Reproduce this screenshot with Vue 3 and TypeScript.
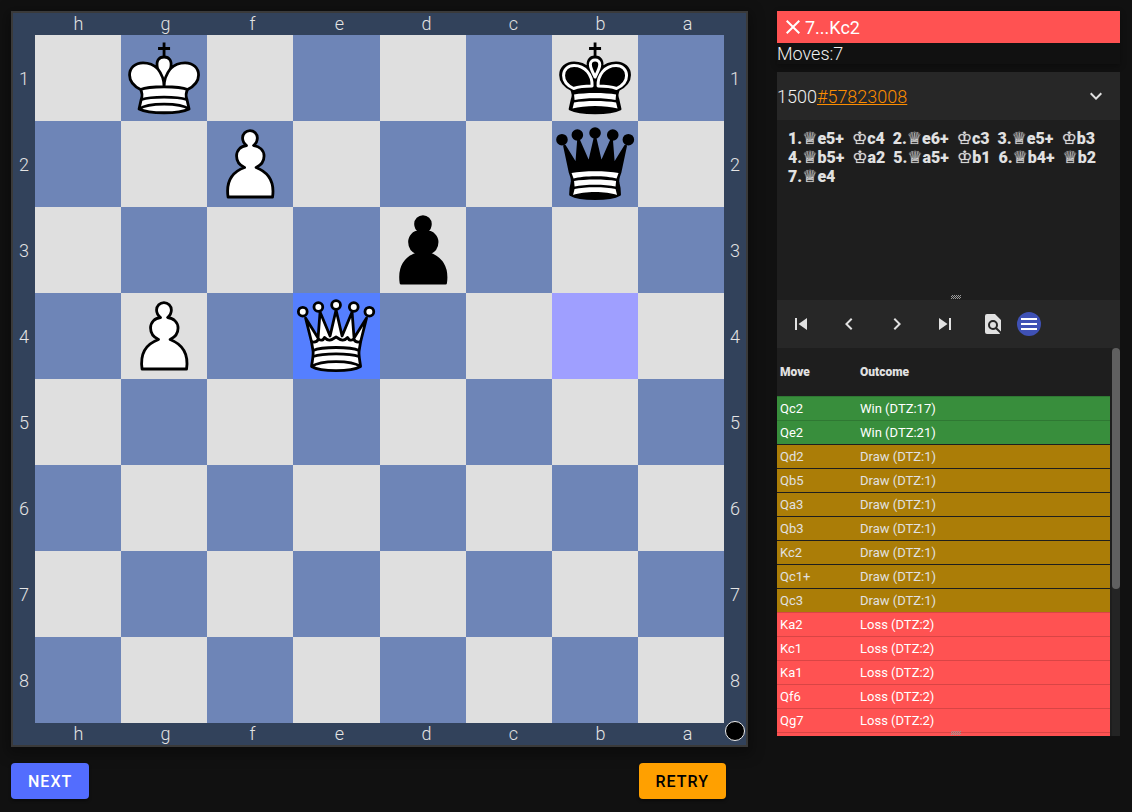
<script setup lang="ts">
type Piece = 'wk' | 'wq' | 'wp' | 'bk' | 'bq' | 'bp'
type Result = 'win' | 'draw' | 'loss'

interface TableRow {
  move: string
  outcome: string
  result: Result
}

interface Move {
  number: string
  figure: string
  to: string
}

const files = ['h', 'g', 'f', 'e', 'd', 'c', 'b', 'a']
const ranks = [1, 2, 3, 4, 5, 6, 7, 8]

const pieces: Record<string, Piece> = {
  g1: 'wk',
  b1: 'bk',
  f2: 'wp',
  b2: 'bq',
  d3: 'bp',
  g4: 'wp',
  e4: 'wq',
}

const squares = ranks.flatMap((rank, row) =>
  files.map((file, col) => {
    const name = `${file}${rank}`
    return {
      name,
      piece: pieces[name],
      dark: (row + col) % 2 === 1,
      origin: name === 'b4',
      target: name === 'e4',
    }
  }),
)

const moves: Move[] = [
  { number: '1.', figure: '♕', to: 'e5+' },
  { number: '', figure: '♔', to: 'c4' },
  { number: '2.', figure: '♕', to: 'e6+' },
  { number: '', figure: '♔', to: 'c3' },
  { number: '3.', figure: '♕', to: 'e5+' },
  { number: '', figure: '♔', to: 'b3' },
  { number: '4.', figure: '♕', to: 'b5+' },
  { number: '', figure: '♔', to: 'a2' },
  { number: '5.', figure: '♕', to: 'a5+' },
  { number: '', figure: '♔', to: 'b1' },
  { number: '6.', figure: '♕', to: 'b4+' },
  { number: '', figure: '♕', to: 'b2' },
  { number: '7.', figure: '♕', to: 'e4' },
]

function rows(result: Result, outcome: string, names: string[]): TableRow[] {
  return names.map((move) => ({ move, outcome, result }))
}

const table: TableRow[] = [
  ...rows('win', 'Win (DTZ:17)', ['Qc2']),
  ...rows('win', 'Win (DTZ:21)', ['Qe2']),
  ...rows('draw', 'Draw (DTZ:1)', ['Qd2', 'Qb5', 'Qa3', 'Qb3', 'Kc2', 'Qc1+', 'Qc3']),
  ...rows('loss', 'Loss (DTZ:2)', ['Ka2', 'Kc1', 'Ka1', 'Qf6', 'Qg7']),
  ...rows('loss', '', ['']),
]

const controls = [
  { label: 'First move', path: 'M6,18V6H8V18H6M9.5,12L18,6V18L9.5,12Z' },
  { label: 'Previous move', path: 'M15.41,16.58L10.83,12L15.41,7.41L14,6L8,12L14,18L15.41,16.58Z' },
  { label: 'Next move', path: 'M8.59,16.58L13.17,12L8.59,7.41L10,6L16,12L10,18L8.59,16.58Z' },
  { label: 'Last move', path: 'M16,18H18V6H16M6,18L14.5,12L6,6V18Z' },
  {
    label: 'Analyse',
    path: 'M9,13A3,3 0 0,0 12,16A3,3 0 0,0 15,13A3,3 0 0,0 12,10A3,3 0 0,0 9,13M20,19.59V8L14,2H6A2,2 0 0,0 4,4V20A2,2 0 0,0 6,22H18C18.45,22 18.85,21.85 19.19,21.6L14.76,17.17C13.96,17.69 13,18 12,18A5,5 0 0,1 7,13A5,5 0 0,1 12,8A5,5 0 0,1 17,13C17,14 16.69,14.96 16.17,15.75L20,19.59Z',
  },
]
</script>

<template>
  <main class="page">
    <section class="play">
      <div class="board">
        <div class="files top">
          <span v-for="f in files" :key="f">{{ f }}</span>
        </div>
        <div class="ranks left">
          <span v-for="r in ranks" :key="r">{{ r }}</span>
        </div>
        <div class="squares">
          <div
            v-for="s in squares"
            :key="s.name"
            class="square"
            :class="{ dark: s.dark, origin: s.origin, target: s.target }"
          >
            <svg v-if="s.piece" class="piece" :class="s.piece[0]" viewBox="0 0 86 86" aria-hidden="true">
              <template v-if="s.piece === 'wp' || s.piece === 'bp'">
                <path
                  d="M21 76C19 62 23.500 51.500 37.500 46.500C32 44 29.500 39.500 29.500 35C29.500 29.500 33.500 25 39.500 24.500C37 22.500 35.500 20 35.500 17A7.400 7.400 0 0 1 50.300 17C50.300 20 49 22.500 46.500 24.500C52.500 25 57 29.500 57 35C57 39.500 54.500 44 49 46.500C62 51.500 67.500 62 65.500 76Z"
                />
              </template>
              <template v-else-if="s.piece === 'wk'">
                <path d="M43 7.500V22M37 13.500H49" />
                <path
                  d="M19.500 54.500C12.500 51 8.500 46.500 8.500 40C8.500 33 14 27.800 22 27.800C28 27.800 33 30 36.500 33.500C34.500 25.500 38 22 43 22C48 22 51.500 25.500 49.500 33.500C53 30 58 27.800 64 27.800C72 27.800 77.500 33 77.500 40C77.500 46.500 73.500 51 66.500 54.500C64.500 58 64.500 61 66 65L68 74C58 79 28 79 18 74L20 65C21.500 61 21.500 58 19.500 54.500Z"
                />
                <path
                  fill="none"
                  d="M43 51.500C43 43 40 38 36.500 33.500M43 51.500C43 43 46 38 49.500 33.500M19.500 54.500C28 50.800 58 50.800 66.500 54.500M20.500 64.500C30 61.200 56 61.200 65.500 64.500M18 74C27 67.500 59 67.500 68 74"
                />
              </template>
              <template v-else-if="s.piece === 'bk'">
                <path d="M43 7.500V22M37 13.500H49" />
                <path
                  d="M19.500 54.500C12.500 51 8.500 46.500 8.500 40C8.500 33 14 27.800 22 27.800C28 27.800 33 30 36.500 33.500C34.500 25.500 38 22 43 22C48 22 51.500 25.500 49.500 33.500C53 30 58 27.800 64 27.800C72 27.800 77.500 33 77.500 40C77.500 46.500 73.500 51 66.500 54.500C64.500 58 64.500 61 66 65L68 74C58 79 28 79 18 74L20 65C21.500 61 21.500 58 19.500 54.500Z"
                />
                <path
                  class="inlay"
                  d="M21.500 53.500C15 50.500 11.500 46 11.500 40.500C11.500 34.500 16 30.500 22 30.500C33 30.500 40.500 40 40 51C33 51 27 51.500 21.500 53.500ZM64.500 53.500C71 50.500 74.500 46 74.500 40.500C74.500 34.500 70 30.500 64 30.500C53 30.500 45.500 40 46 51C53 51 59 51.500 64.500 53.500ZM43 42C40 36 38.300 33 38.300 29.500C38.300 23.500 47.700 23.500 47.700 29.500C47.700 33 46 36 43 42Z"
                />
                <path
                  class="light"
                  d="M22 59.500C33 57.500 53 57.500 64 59.500L63.500 65C53 62.500 33 62.500 22.500 65ZM22 67.500C33 65.500 53 65.500 64 67.500L65.500 73.500C54 70 32 70 20.500 73.500Z"
                />
              </template>
              <template v-else-if="s.piece === 'wq'">
                <path
                  d="M18.500 49L12.500 25L25 45L27 19L37 43L43 17L49 43L59 19L61 45L73.500 25L67.500 49L66 58C65.500 62 66.500 66 67.500 73.500C58 79 28 79 18.500 73.500C19.500 66 20.500 62 20 58Z"
                />
                <path
                  fill="none"
                  d="M18 48.500C20.500 49.500 23.500 49.500 25.500 46C28 48 30 47.500 31.500 44.500C35 48.500 38 47.500 43 44C48 47.500 51 48.500 54.500 44.500C56 47.500 58 48 60.500 46C62.500 49.500 65.500 49.500 68 48.500M20 57.500C29 53.500 57 53.500 66 57.500M20 63.500C30 60 56 60 66 63.500M18.500 73.500C28 67 58 67 67.500 73.500"
                />
                <circle cx="9.700" cy="18.700" r="4.400" />
                <circle cx="25.300" cy="14" r="4.400" />
                <circle cx="43" cy="12" r="4.400" />
                <circle cx="60.700" cy="14" r="4.400" />
                <circle cx="76.300" cy="18.700" r="4.400" />
              </template>
              <template v-else>
                <path
                  d="M18 51L12.500 25L24.500 44.500L26.500 19L37 43L43 17L49 43L59.500 19L61.500 44.500L73.500 25L68 51C67 54 65 58 66 62C67.500 67 67.500 70 67.500 73.500C58 79 28 79 18.500 73.500C18.500 70 18.500 67 20 62C21 58 19 54 18 51Z"
                />
                <path
                  class="light"
                  d="M19.500 52C32 49.500 54 49.500 66.500 52L64.500 57.500C54 54.500 32 54.500 21.500 57.500ZM22 60C33 58 53 58 64 60L63.500 65.500C53 63 33 63 22.500 65.500ZM22.500 68C33 65.500 53 65.500 63.500 68L65 74C54 70 32 70 21 74Z"
                />
                <circle cx="9.900" cy="18.700" r="4.400" />
                <circle cx="25.300" cy="14" r="4.400" />
                <circle cx="43" cy="12" r="4.400" />
                <circle cx="60.700" cy="14" r="4.400" />
                <circle cx="76.300" cy="18.700" r="4.400" />
              </template>
            </svg>
          </div>
        </div>
        <div class="ranks right">
          <span v-for="r in ranks" :key="r">{{ r }}</span>
        </div>
        <div class="files bottom">
          <span v-for="f in files" :key="f">{{ f }}</span>
        </div>
        <div class="turn"></div>
      </div>
      <div class="actions">
        <button type="button" class="action next">NEXT</button>
        <button type="button" class="action retry">RETRY</button>
      </div>
    </section>

    <aside class="panel">
      <header class="status">
        <div class="verdict">
          <svg class="icon" viewBox="0 0 24 24" aria-hidden="true">
            <path d="M19,6.410L17.590,5L12,10.590L6.410,5L5,6.410L10.590,12L5,17.590L6.410,19L12,13.410L17.590,19L19,17.590L13.410,12L19,6.410Z" />
          </svg>
          <span>7...Kc2</span>
        </div>
        <div class="count">Moves:7</div>
      </header>

      <div class="bar puzzle">
        <span>1500</span><a href="#57823008">#57823008</a>
        <button type="button" class="tool expand" aria-label="Show details">
          <svg class="icon" viewBox="0 0 24 24" aria-hidden="true">
            <path d="M7.410,8.580L12,13.170L16.590,8.580L18,10L12,16L6,10L7.410,8.580Z" />
          </svg>
        </button>
      </div>

      <div class="history">
        <p class="moves">
          <template v-for="(m, i) in moves" :key="i"><span class="move">{{ m.number }}<span class="figure">{{ m.figure }}</span>{{ m.to }}</span>{{ ' ' }}</template>
        </p>
        <div class="grip"></div>
      </div>

      <nav class="bar">
        <button v-for="c in controls" :key="c.label" type="button" class="tool" :aria-label="c.label">
          <svg class="icon" viewBox="0 0 24 24" aria-hidden="true"><path :d="c.path" /></svg>
        </button>
        <button type="button" class="menu" aria-label="Tablebase">
          <svg class="icon" viewBox="0 0 24 24" aria-hidden="true">
            <path d="M4,6H20V8H4V6M4,11H20V13H4V11M4,16H20V18H4V16Z" />
          </svg>
        </button>
      </nav>

      <div class="tablebase">
        <table>
          <thead>
            <tr>
              <th class="first">Move</th>
              <th>Outcome</th>
            </tr>
          </thead>
          <tbody>
            <tr v-for="(row, i) in table" :key="i" :class="row.result">
              <td>{{ row.move }}</td>
              <td>{{ row.outcome }}</td>
            </tr>
          </tbody>
        </table>
        <div class="track"><div class="thumb"></div></div>
        <div class="grip"></div>
      </div>
    </aside>
  </main>
</template>

<style>
body {
  margin: 0;
  background: #111;
}
</style>

<style scoped>
.page {
  display: grid;
  grid-template-columns: minmax(0, 737fr) minmax(0, 343fr);
  gap: 29px;
  align-items: start;
  padding: 11px 12px 12px 11px;
  font-family: Roboto, 'DejaVu Sans', sans-serif;
  font-size: 18px;
  font-weight: 300;
  color: #f0f0f0;
}

.board {
  display: grid;
  grid-template: 22px auto 22px / 22px minmax(0, 1fr) 22px;
  border: 2px solid #3a3a3a;
  background: #32425b;
  box-shadow: 0 4px 12px 4px rgba(0, 0, 0, 0.3);
  color: #e4e4e4;
}

.files {
  grid-column: 2 / 4;
  display: grid;
  grid-template-columns: repeat(8, 1fr);
  padding-right: 15px;
  line-height: 22px;
  text-align: center;
}

.top {
  grid-row: 1;
}

.bottom {
  grid-row: 3;
}

.ranks {
  grid-row: 2;
  display: grid;
  grid-template-rows: repeat(8, 1fr);
  align-items: center;
  text-align: center;
}

.left {
  grid-column: 1;
}

.right {
  grid-column: 3;
}

.squares {
  grid-column: 2;
  grid-row: 2;
  display: grid;
  grid-template: repeat(8, minmax(0, 1fr)) / repeat(8, minmax(0, 1fr));
  aspect-ratio: 689 / 688;
}

.square {
  background: #dfdfdf;
}

.dark {
  background: #6e85b7;
}

.origin {
  background: #9f9fff;
}

.target {
  background: #557fff;
}

.piece {
  display: block;
  width: 100%;
  height: 100%;
  fill: #fff;
  stroke: #000;
  stroke-width: 2.8;
  stroke-linejoin: round;
}

.piece.b {
  fill: #000;
}

.piece .inlay {
  stroke: #fff;
  stroke-width: 3;
}

.piece .light {
  fill: #fff;
  stroke: none;
}

.turn {
  grid-column: 3;
  grid-row: 3;
  align-self: center;
  justify-self: center;
  box-sizing: border-box;
  width: 20px;
  height: 20px;
  margin-bottom: 6px;
  border: 1px solid #eee;
  border-radius: 50%;
  background: #000;
}

.actions {
  display: flex;
  justify-content: space-between;
  padding: 16px 22px 0 0;
}

.action {
  height: 36px;
  padding: 0 17px;
  border: 0;
  border-radius: 4px;
  font: 500 16px Roboto, sans-serif;
  letter-spacing: 1px;
  box-shadow: 0 2px 3px rgba(0, 0, 0, 0.4);
  cursor: pointer;
}

.next {
  background: #536dfe;
  color: #fff;
}

.retry {
  background: #ffa000;
  color: #000;
}

.panel {
  display: flex;
  flex-direction: column;
}

.status {
  margin-bottom: 8px;
  box-shadow: 0 2px 6px rgba(0, 0, 0, 0.3);
}

.verdict {
  display: flex;
  align-items: center;
  height: 32px;
  padding-left: 4px;
  background: #ff5252;
  color: #fff;
  font-weight: 400;
}

.count {
  line-height: 21px;
}

.icon {
  display: block;
  width: 24px;
  height: 24px;
  fill: currentColor;
}

.bar {
  display: flex;
  align-items: center;
  height: 48px;
  background: #272727;
}

.puzzle a {
  color: #fb8c00;
}

.tool,
.menu {
  display: grid;
  place-items: center;
  padding: 0;
  border: 0;
  background: none;
  color: #e1e1e1;
  cursor: pointer;
}

.tool {
  width: 48px;
  height: 48px;
}

.expand {
  margin-left: auto;
}

.menu {
  border-radius: 50%;
  background: #3f51b5;
  color: #fff;
}

.history {
  position: relative;
  min-height: 180px;
  background: #1e1e1e;
}

.moves {
  margin: 0;
  padding: 9px 8px 0 11px;
  font-size: 16px;
  font-weight: 900;
  line-height: 19px;
  color: #e1e1e1;
}

.move {
  display: inline-block;
  margin-right: 4px;
}

.figure {
  font-size: 17px;
  line-height: 1;
  text-shadow: 0 0 1px currentColor;
}

.grip {
  position: absolute;
  bottom: 1px;
  left: 50%;
  width: 10px;
  height: 4px;
  margin-left: 2px;
  background: repeating-conic-gradient(#999 0 25%, transparent 0 50%) 0 0 / 2px 2px;
}

.tablebase {
  position: relative;
  display: flex;
  justify-content: space-between;
  height: 388px;
  overflow: hidden;
  background: #1e1e1e;
}

table {
  flex: 1;
  border-collapse: separate;
  border-spacing: 0;
  table-layout: fixed;
  margin-right: 2px;
  font-size: 13px;
  font-weight: 400;
  color: #e1e1e1;
}

th {
  height: 48px;
  padding: 0 3px;
  font-size: 12px;
  font-weight: 900;
  text-align: left;
}

.first {
  width: 74px;
}

td {
  box-sizing: border-box;
  height: 24px;
  padding: 0 3px;
  border-top: 1px solid rgba(0, 0, 0, 0.15);
  line-height: 22px;
}

.win {
  background: #388e3c;
  color: #fff;
}

.draw {
  background: #ab7d07;
}

.draw td {
  border-top-color: #1e1e1e;
}

.loss {
  background: #ff5252;
  color: #fff;
}

.track {
  width: 8px;
  background: #242424;
}

.thumb {
  height: 62%;
  border-radius: 4px;
  background: #606060;
}
</style>
